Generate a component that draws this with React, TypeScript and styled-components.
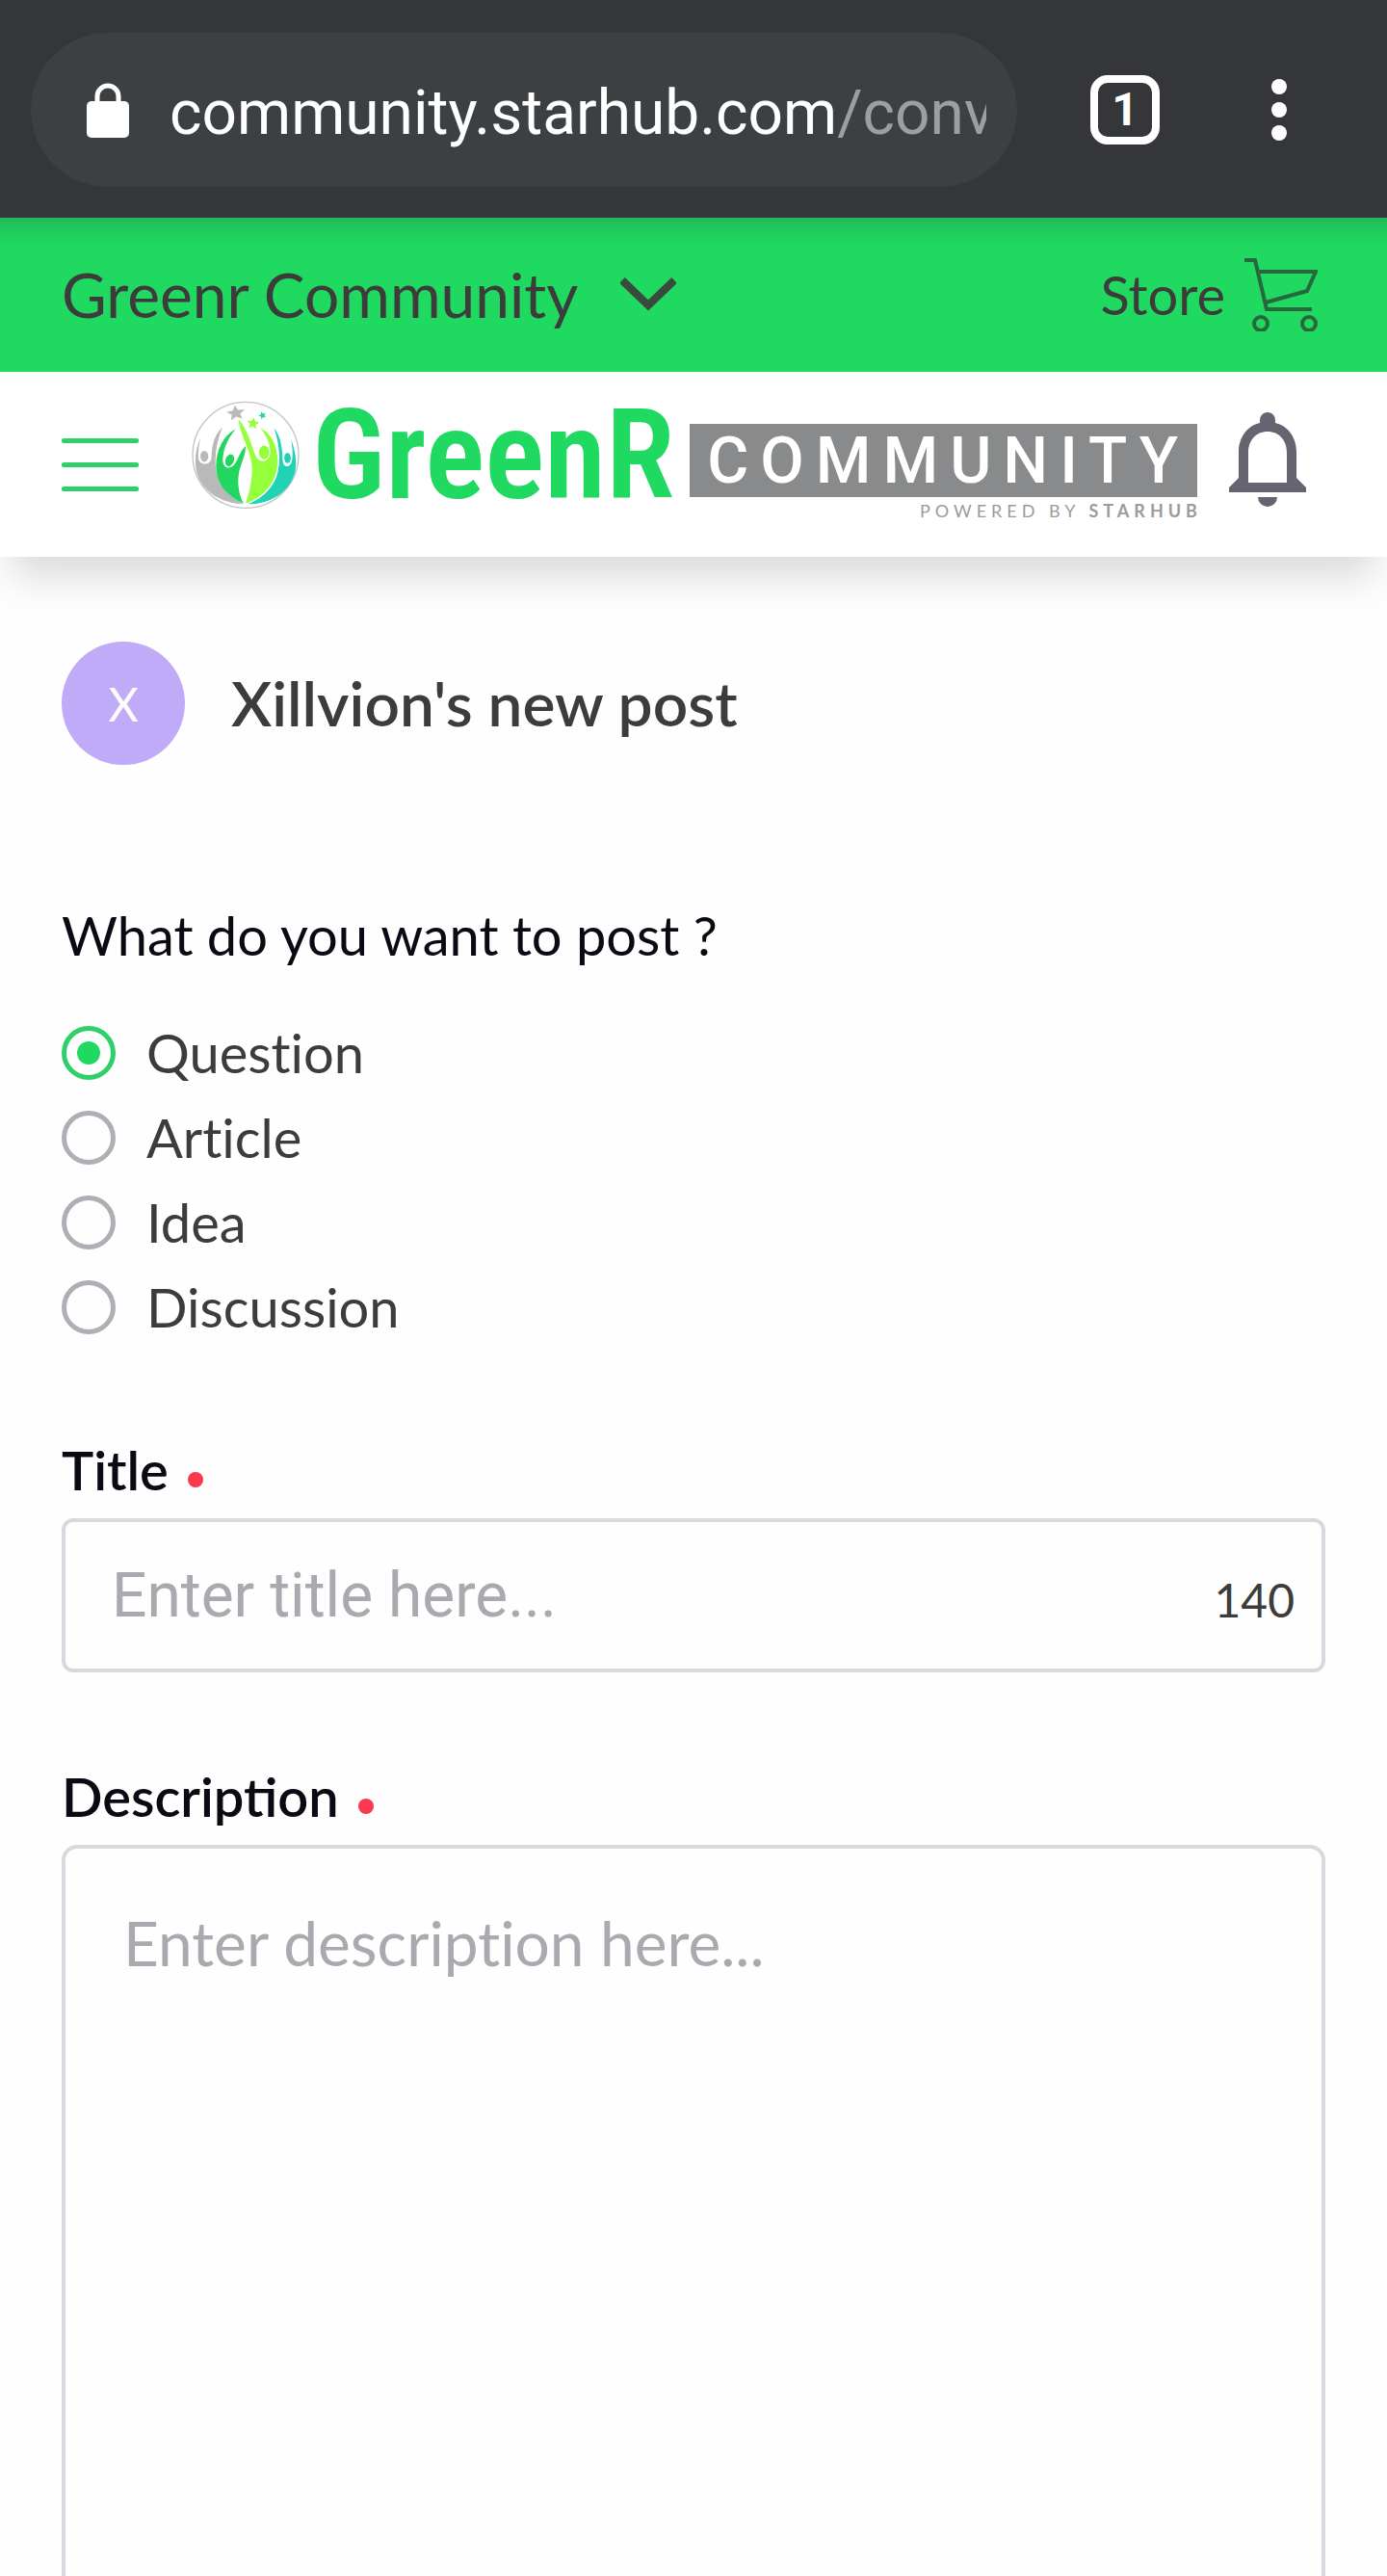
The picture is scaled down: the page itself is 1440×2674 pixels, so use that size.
import React, { useState } from 'react';
import styled, { createGlobalStyle } from 'styled-components';

const GREEN = '#20d960';
const INK = '#3c3c3b';

const GlobalStyle = createGlobalStyle`
  *, *::before, *::after { box-sizing: border-box; }
  body { margin: 0; background: #fefefe; font-family: Lato, "Liberation Sans", sans-serif; color: ${INK}; }
  button, input, textarea { font: inherit; color: inherit; }
  button { border: 0; padding: 0; background: none; cursor: pointer; }
  a { color: inherit; text-decoration: none; }
  svg { display: block; flex: none; }
`;

const Page = styled.div`
  display: flex;
  flex-direction: column;
  min-height: 100vh;
`;

/* Browser bar */
const BrowserBar = styled.div`
  display: flex;
  align-items: center;
  padding: 34px 88px 32px 32px;
  background: #35363a;
  color: #fff;
  font-family: Roboto, "Liberation Sans", sans-serif;
`;

const AddressBar = styled.button`
  display: flex;
  flex: 1;
  align-items: center;
  min-width: 0;
  height: 160px;
  padding: 0 32px 0 58px;
  gap: 42px;
  border-radius: 80px;
  background: #3c4043;
  color: #fff;
  font-size: 64px;
  text-align: left;
`;

const Url = styled.span`
  flex: 1;
  min-width: 0;
  padding-top: 6px;
  overflow: hidden;
  white-space: nowrap;
`;

const UrlPath = styled.span`
  color: #9d9ea0;
`;

const TabCount = styled.button`
  width: 72px;
  height: 72px;
  margin-left: 76px;
  border: 8px solid #fff;
  border-radius: 18px;
  font-size: 48px;
  font-weight: 700;
  line-height: 56px;
`;

const MoreButton = styled.button`
  display: flex;
  justify-content: center;
  width: 48px;
  margin-left: 100px;
`;

/* Community switcher */
const CommunityBar = styled.nav`
  display: flex;
  align-items: center;
  justify-content: space-between;
  height: 160px;
  padding: 0 72px 0 64px;
  background: linear-gradient(#22b858 0, #20c65b 10px, #20d45f 22px, ${GREEN} 34px);
`;

const Switcher = styled.button`
  display: flex;
  align-items: center;
  gap: 44px;
  font-size: 64px;
  line-height: 76px;
`;

const StoreLink = styled.a`
  display: flex;
  align-items: center;
  gap: 20px;
  font-size: 56px;
  line-height: 68px;
`;

/* Site header */
const Header = styled.header`
  display: flex;
  align-items: center;
  height: 192px;
  padding: 0 84px 0 64px;
  background: #fff;
  box-shadow: 0 32px 40px -12px rgba(0, 0, 0, 0.15);
`;

const MenuButton = styled.button`
  display: flex;
  flex-direction: column;
  gap: 20px;
  width: 80px;
`;

const MenuLine = styled.span`
  height: 5px;
  border-radius: 2px;
  background: #2fd069;
`;

const Logo = styled.a`
  display: flex;
  align-items: flex-start;
  height: 132px;
  margin-left: 54px;
`;

const WordMark = styled.span`
  margin-left: 12px;
  color: ${GREEN};
  font-family: "Roboto Condensed", Roboto, sans-serif;
  font-size: 130px;
  font-weight: 600;
  line-height: 114px;
`;

const Tagline = styled.span`
  display: flex;
  flex-direction: column;
  align-items: flex-end;
  margin-left: 16px;
  padding-top: 24px;
`;

const TagBlock = styled.span`
  padding: 2px 8px 0 18px;
  background: #898a8c;
  color: #fff;
  font-family: Roboto, "Liberation Sans", sans-serif;
  font-size: 66px;
  font-weight: 500;
  line-height: 74px;
  letter-spacing: 12px;
`;

const Powered = styled.span`
  margin: 4px -5px 0 0;
  color: #9a9b9d;
  font-size: 18px;
  line-height: 20px;
  letter-spacing: 5px;
`;

const BellButton = styled.button`
  width: 80px;
  margin: 0 0 10px auto;
`;

/* Post form */
const Form = styled.form`
  display: flex;
  flex: 1;
  flex-direction: column;
  padding: 88px 64px 0;
`;

const Author = styled.div`
  display: flex;
  align-items: center;
  gap: 48px;
`;

const Avatar = styled.span`
  display: flex;
  align-items: center;
  justify-content: center;
  width: 128px;
  height: 128px;
  border-radius: 50%;
  background: #bfabf7;
  color: #fff;
  font-size: 48px;
`;

const PostHeading = styled.h1`
  margin: 0;
  font-size: 64px;
  font-weight: 600;
  line-height: 76px;
`;

const TypeGroup = styled.fieldset`
  min-width: 0;
  margin: 143px 0 0;
  padding: 0;
  border: 0;
`;

const Legend = styled.legend`
  margin-bottom: 44px;
  padding: 0;
  color: #0a0a14;
  font-size: 56px;
  line-height: 68px;
`;

const Option = styled.label`
  display: flex;
  align-items: center;
  gap: 32px;
  height: 88px;
  font-size: 56px;
  font-variant-ligatures: none;
`;

const OptionText = styled.span`
  padding-bottom: 2px;
`;

const Radio = styled.input`
  display: grid;
  place-content: center;
  appearance: none;
  width: 56px;
  height: 56px;
  margin: 0;
  border: 5px solid #afaeb5;
  border-radius: 50%;

  &:checked { border-color: #2fd069; }
  &:checked::before {
    content: '';
    width: 24px;
    height: 24px;
    border-radius: 50%;
    background: ${GREEN};
  }
`;

const Field = styled.div<{ $gap: number; $grow?: boolean }>`
  display: flex;
  flex: ${(p) => (p.$grow ? '1' : 'none')};
  flex-direction: column;
  gap: 16px;
  margin-top: ${(p) => p.$gap}px;
`;

const FieldLabel = styled.label`
  display: flex;
  align-items: center;
  gap: 20px;
  color: #0a0a14;
  font-size: 56px;
  font-weight: 600;
  line-height: 68px;
`;

const RequiredDot = styled.span`
  width: 16px;
  height: 16px;
  margin-top: 20px;
  border-radius: 50%;
  background: #fb384d;
`;

const TitleBox = styled.div`
  display: flex;
  align-items: center;
  height: 160px;
  padding: 0 28px 0 48px;
  border: 4px solid #d8d8df;
  border-radius: 12px;
`;

const TitleInput = styled.input`
  flex: 1;
  min-width: 0;
  padding: 0;
  border: 0;
  outline: 0;
  background: none;
  font-family: Roboto, "Liberation Sans", sans-serif;
  font-size: 64px;

  &::placeholder { color: #a9a9b0; opacity: 1; }
`;

const Counter = styled.output`
  padding-top: 8px;
  font-size: 48px;
`;

const Description = styled.textarea`
  flex: 1;
  width: 100%;
  min-height: 640px;
  padding: 60px;
  border: 4px solid #d8d8df;
  border-bottom: 0;
  border-radius: 16px 16px 0 0;
  outline: 0;
  background: none;
  font-size: 64px;
  font-variant-ligatures: none;
  line-height: 76px;
  resize: none;

  &::placeholder { color: #a9a9b0; opacity: 1; }
`;

const LockIcon = () => (
  <svg width="44" height="57" viewBox="0 0 44 57" fill="none" aria-hidden="true">
    <path d="M11 24V14a11 11 0 0 1 22 0v10" stroke="#fff" strokeWidth="5" />
    <rect y="19" width="44" height="38" rx="5" fill="#fff" />
  </svg>
);

const DotsIcon = () => (
  <svg width="16" height="64" viewBox="0 0 16 64" fill="#fff" aria-hidden="true">
    <circle cx="8" cy="8" r="8" />
    <circle cx="8" cy="32" r="8" />
    <circle cx="8" cy="56" r="8" />
  </svg>
);

const ChevronIcon = () => (
  <svg width="58" height="36" viewBox="0 0 58 36" fill="none" aria-hidden="true">
    <path d="M2 3 29 29 56 3" stroke="#3a4a3c" strokeWidth="8" />
  </svg>
);

const CartIcon = () => (
  <svg width="76" height="76" viewBox="0 0 76 76" fill="none" stroke="#28683c" strokeWidth="4" aria-hidden="true">
    <path d="M0 2h11l12 51h47" />
    <path d="M15 14h59l-9 20-43 12" />
    <circle cx="17" cy="68" r="7" />
    <circle cx="67" cy="68" r="7" />
  </svg>
);

const BellIcon = () => (
  <svg width="80" height="98" viewBox="0 0 80 98" fill="#656470" aria-hidden="true">
    <path
      fillRule="evenodd"
      d="M32 11V8a8 8 0 0 1 16 0v3c13 3 22 15 22 30v27l10 10v5H0v-5l10-10V41c0-15 9-27 22-30ZM20 73h40V42c0-13-8-22-20-22s-20 9-20 22Z"
    />
    <path d="M30 88h20a10 10 0 0 1-20 0Z" />
  </svg>
);

const STAR = 'M0-1 .27-.36.95-.31.43.14.59.81 0 .45-.59.81-.43.14-.95-.31-.27-.36Z';

const Emblem = () => (
  <svg width="114" height="114" viewBox="27 46 338 338" aria-hidden="true">
    <circle cx="196" cy="213" r="163" fill="#fff" stroke="#c4c4c4" strokeWidth="4" />
    <path fill="#b9b9b9" d="M58 160C38 198 36 250 52 285c24 50 80 78 138 79-45-22-78-58-85-104-6-43 2-88 19-132-24 24-32 52-33 92-2 26-37 27-40 3-2-22 1-42 7-63Z" />
    <ellipse cx="69" cy="217" rx="12" ry="17" fill="#b9b9b9" />
    <path fill="#22d760" d="M166 133c-44 22-66 78-60 130 6 48 42 82 84 99-18-30-22-76-10-112 8-24 16-42 16-65-18 16-22 42-37 60-16 16-36 4-33-22 3-36 18-64 40-90Z" />
    <ellipse cx="147" cy="229" rx="13" ry="19" fill="#22d760" transform="rotate(20 147 229)" />
    <path fill="#95ff3b" d="M174 104c5 48 35 88 41 138 4 46-9 88-19 120 50-16 93-60 98-118 4-52-16-96-54-116 20 24 32 50 32 78-2 30-34 34-46 8-15-38-24-82-52-110Z" />
    <ellipse cx="253" cy="205" rx="16" ry="21" fill="#95ff3b" />
    <path fill="#20d3b5" d="M284 130c14 44 20 86 12 132-10 50-48 84-93 102 68 2 132-38 146-102 6-34-2-66-13-98 4 24 6 46 3 66-6 26-28 22-29-2-1-36-6-72-26-98Z" />
    <ellipse cx="325" cy="222" rx="10" ry="16" fill="#20d3b5" />
    <path fill="#b9b9b9" d={STAR} transform="translate(166 84) rotate(-8) scale(30 24)" />
    <path fill="#95ff3b" d={STAR} transform="translate(219 116) rotate(8) scale(20 19)" />
    <path fill="#20d3b5" d={STAR} transform="translate(248 91) rotate(-20) scale(13 12)" />
  </svg>
);

const POST_TYPES = ['Question', 'Article', 'Idea', 'Discussion'];
const TITLE_LIMIT = 140;

export default function App() {
  const [type, setType] = useState('Question');
  const [title, setTitle] = useState('');

  return (
    <Page>
      <GlobalStyle />
      <BrowserBar>
        <AddressBar type="button">
          <LockIcon />
          <Url>
            community.starhub.com<UrlPath>/conv</UrlPath>
          </Url>
        </AddressBar>
        <TabCount type="button">1</TabCount>
        <MoreButton type="button" aria-label="More options">
          <DotsIcon />
        </MoreButton>
      </BrowserBar>

      <CommunityBar>
        <Switcher type="button">
          Greenr Community
          <ChevronIcon />
        </Switcher>
        <StoreLink href="#store">
          Store
          <CartIcon />
        </StoreLink>
      </CommunityBar>

      <Header>
        <MenuButton type="button" aria-label="Menu">
          <MenuLine />
          <MenuLine />
          <MenuLine />
        </MenuButton>
        <Logo href="#home">
          <Emblem />
          <WordMark>GreenR</WordMark>
          <Tagline>
            <TagBlock>COMMUNITY</TagBlock>
            <Powered>
              POWERED BY <b>STARHUB</b>
            </Powered>
          </Tagline>
        </Logo>
        <BellButton type="button" aria-label="Notifications">
          <BellIcon />
        </BellButton>
      </Header>

      <Form onSubmit={(e) => e.preventDefault()}>
        <Author>
          <Avatar>X</Avatar>
          <PostHeading>Xillvion's new post</PostHeading>
        </Author>

        <TypeGroup>
          <Legend>What do you want to post ?</Legend>
          {POST_TYPES.map((name) => (
            <Option key={name}>
              <Radio type="radio" name="type" value={name} checked={type === name} onChange={() => setType(name)} />
              <OptionText>{name}</OptionText>
            </Option>
          ))}
        </TypeGroup>

        <Field $gap={91}>
          <FieldLabel htmlFor="title">
            Title
            <RequiredDot />
          </FieldLabel>
          <TitleBox>
            <TitleInput
              id="title"
              placeholder="Enter title here..."
              maxLength={TITLE_LIMIT}
              value={title}
              onChange={(e) => setTitle(e.target.value)}
            />
            <Counter htmlFor="title">{TITLE_LIMIT - title.length}</Counter>
          </TitleBox>
        </Field>

        <Field $gap={95} $grow>
          <FieldLabel htmlFor="description">
            Description
            <RequiredDot />
          </FieldLabel>
          <Description id="description" placeholder="Enter description here..." />
        </Field>
      </Form>
    </Page>
  );
}
